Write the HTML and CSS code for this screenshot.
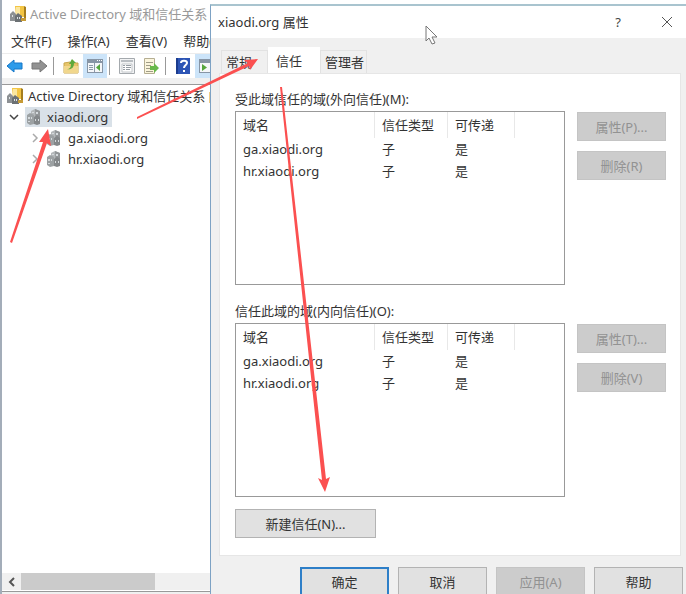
FILE: index.html
```
<!DOCTYPE html>
<html lang="zh-CN">
  <head>
    <meta charset="UTF-8" />
    <meta name="viewport" content="width=device-width, initial-scale=1.0" />
    <title>Active Directory 域和信任关系</title>
    <link rel="stylesheet" href="styles.css">
  </head>
  <body>
    <!-- Shared icons -->
    <svg class="defs" width="0" height="0" aria-hidden="true">
      <symbol id="icon-console" viewBox="0 0 16 16">
        <path d="M5 0h9l1 11H6z" fill="#f3c544" />
        <path d="M6 1h4v8H6z" fill="#fbe7a0" />
        <path d="M14 0l2 1v11l-2 2z" fill="#a57d1e" />
        <path d="M0 8l3-3 3 3v7H0z" fill="#8d9194" />
        <path d="M5 10l3-3 4 3v6H5z" fill="#6c7174" />
        <path d="M2 9h1v2H2zM7 11h1v2H7zM9 11h1v2H9z" fill="#dde2e4" />
        <path d="M11 12h5v3h-5z" fill="#c69a35" />
      </symbol>
      <symbol id="icon-domain" viewBox="0 0 16 16">
        <path d="M5 2l4-2 5 2v11l-5 2-4-2z" fill="#b4b8ba" />
        <path d="M9 0l5 2v12l-4 1z" fill="#929698" />
        <path d="M1 6l3-2 4 2v9l-4 1-3-2z" fill="#9ca1a3" />
        <path d="M8 8l3-2 3 2v7l-3 1-3-1z" fill="#838789" />
        <path d="M6 3h2v1H6zM10 3h2v2h-2zM2 8h2v2H2zM5 8h1v2H5zM2 12h2v1H2zM9 10h1v2H9zM12 10h1v2h-1z" fill="#d5dadd" />
      </symbol>
    </svg>

    <!-- Console window -->
    <div class="console">
      <header class="console-title">
        <svg class="icon"><use href="#icon-console" /></svg>
        <span>Active Directory 域和信任关系</span>
      </header>
      <nav class="menu">
        <button type="button">文件(F)</button>
        <button type="button">操作(A)</button>
        <button type="button">查看(V)</button>
        <button type="button">帮助(H)</button>
      </nav>
      <div class="toolbar">
        <button type="button" class="tool" aria-label="后退">
          <svg class="icon" viewBox="0 0 16 16"><path d="M0 8l7-6v3h8v6H7v3z" fill="#2c9bea" stroke="#1576c8" /></svg>
        </button>
        <button type="button" class="tool" aria-label="前进">
          <svg class="icon" viewBox="0 0 16 16"><path d="M16 8L9 2v3H1v6h8v3z" fill="#929292" stroke="#767676" /></svg>
        </button>
        <span class="sep"></span>
        <button type="button" class="tool" aria-label="上一级">
          <svg class="icon" viewBox="0 0 16 16">
            <path d="M1 5l6-1 1 1h7v10H1z" fill="#e7c56a" stroke="#c9a64c" />
            <path d="M1 8h14v7H1z" fill="#f1d78d" />
            <path d="M4 11c3 0 4-2 4-5H6l3-5 4 4h-2c0 5-3 7-7 6z" fill="#5fa93c" />
          </svg>
        </button>
        <button type="button" class="tool active" aria-label="显示控制台树">
          <svg class="icon" viewBox="0 0 16 16">
            <path d="M0 1h16v14H0z" fill="#8795a5" />
            <path d="M1 5h14v9H1z" fill="#f5f7f9" />
            <path d="M2 7h4v1H2zM2 9h4v1H2zM2 11h4v1H2zM7 5h1v9H7z" fill="#8c99a8" />
            <path d="M13 6v7L9 9.5z" fill="#55a53c" />
            <path d="M10 2h1v1h-1zM12 2h1v1h-1zM14 2h1v1h-1z" fill="#fff" />
          </svg>
        </button>
        <span class="sep"></span>
        <button type="button" class="tool" aria-label="属性">
          <svg class="icon" viewBox="0 0 16 16">
            <path d="M.5.5h15v15H.5z" fill="#f2f3f4" stroke="#a4a9ad" />
            <path d="M2 2h12v2H2z" fill="#b9bec2" />
            <path d="M3 6h10v8H3z" fill="#fff" stroke="#c4c8cb" />
            <path d="M4 7h2v1H4zM7 7h5v1H7zM4 9h2v1H4zM7 9h5v1H7zM4 11h2v1H4zM7 11h4v1H7z" fill="#969da3" />
          </svg>
        </button>
        <button type="button" class="tool" aria-label="导出列表">
          <svg class="icon" viewBox="0 0 16 16">
            <path d="M1.500.5h10v15h-10z" fill="#fbf5dc" stroke="#b5ae92" />
            <path d="M3 4h7v1H3zM3 7h5v1H3zM3 10h5v1H3zM3 13h7v1H3z" fill="#a09c88" />
            <path d="M7 8h4V5l5 5-5 5v-3H7z" fill="#69b84a" />
          </svg>
        </button>
        <span class="sep"></span>
        <button type="button" class="tool" aria-label="帮助">
          <svg class="icon" viewBox="0 0 16 16">
            <path d="M1 0h14v16H1z" fill="#2d55b5" />
            <path d="M1 0h2v16H1z" fill="#1b3c8e" />
            <path d="M6 5c0-3 6-3 6 0 0 2-3 2-3 5" fill="none" stroke="#fff" stroke-width="2" />
            <path d="M8 12h2v2H8z" fill="#fff" />
          </svg>
        </button>
        <button type="button" class="tool active" aria-label="显示操作窗格">
          <svg class="icon" viewBox="0 0 16 16">
            <path d="M0 1h16v14H0z" fill="#8795a5" />
            <path d="M1 5h14v9H1z" fill="#f5f7f9" />
            <path d="M3 6v7l5-3.500z" fill="#55a53c" />
          </svg>
        </button>
      </div>

      <div class="tree-pane">
        <ul class="tree">
          <li class="node root">
            <svg class="icon"><use href="#icon-console" /></svg>
            <span class="node-label">Active Directory 域和信任关系 [ DC</span>
          </li>
          <li class="node">
            <svg class="chevron open" viewBox="0 0 10 10"><path d="M1 3l4 4 4-4" /></svg>
            <span class="selected">
              <svg class="icon"><use href="#icon-domain" /></svg>
              <span class="node-label">xiaodi.org</span>
            </span>
          </li>
          <li class="node child">
            <svg class="chevron" viewBox="0 0 10 10"><path d="M3 1l4 4-4 4" /></svg>
            <svg class="icon"><use href="#icon-domain" /></svg>
            <span class="node-label">ga.xiaodi.org</span>
          </li>
          <li class="node child">
            <svg class="chevron" viewBox="0 0 10 10"><path d="M3 1l4 4-4 4" /></svg>
            <svg class="icon"><use href="#icon-domain" /></svg>
            <span class="node-label">hr.xiaodi.org</span>
          </li>
        </ul>
        <div class="scrollbar">
          <button type="button" class="scroll-left" aria-label="向左滚动">
            <svg width="8" height="10" viewBox="0 0 8 10"><path d="M6 1L2 5l4 4" /></svg>
          </button>
          <div class="thumb"></div>
        </div>
      </div>
    </div>

    <!-- Properties dialog -->
    <section class="dialog" role="dialog" aria-labelledby="dialogTitle">
      <header class="dialog-title">
        <h1 id="dialogTitle">xiaodi.org 属性</h1>
        <button type="button" class="title-btn help" aria-label="帮助">?</button>
        <button type="button" class="title-btn" aria-label="关闭">
          <svg width="12" height="12" viewBox="0 0 12 12"><path d="M1 1l10 10M11 1L1 11" /></svg>
        </button>
      </header>

      <div class="dialog-body">
        <div class="tabs" role="tablist">
          <button type="button" class="tab" role="tab">常规</button>
          <button type="button" class="tab current" role="tab" aria-selected="true">信任</button>
          <button type="button" class="tab" role="tab">管理者</button>
        </div>

        <div class="panel" role="tabpanel">
          <h2 id="outgoing">受此域信任的域(外向信任)(M):</h2>
          <div class="trusts">
            <div class="list">
              <table aria-labelledby="outgoing">
                <thead>
                  <tr><th class="col-name">域名</th><th class="col-type">信任类型</th><th class="col-pass">可传递</th><th></th></tr>
                </thead>
                <tbody>
                  <tr><td>ga.xiaodi.org</td><td>子</td><td>是</td><td></td></tr>
                  <tr><td>hr.xiaodi.org</td><td>子</td><td>是</td><td></td></tr>
                </tbody>
              </table>
            </div>
            <div class="side">
              <button type="button" class="btn" disabled>属性(P)...</button>
              <button type="button" class="btn" disabled>删除(R)</button>
            </div>
          </div>

          <h2 id="incoming">信任此域的域(内向信任)(O):</h2>
          <div class="trusts">
            <div class="list">
              <table aria-labelledby="incoming">
                <thead>
                  <tr><th class="col-name">域名</th><th class="col-type">信任类型</th><th class="col-pass">可传递</th><th></th></tr>
                </thead>
                <tbody>
                  <tr><td>ga.xiaodi.org</td><td>子</td><td>是</td><td></td></tr>
                  <tr><td>hr.xiaodi.org</td><td>子</td><td>是</td><td></td></tr>
                </tbody>
              </table>
            </div>
            <div class="side">
              <button type="button" class="btn" disabled>属性(T)...</button>
              <button type="button" class="btn" disabled>删除(V)</button>
            </div>
          </div>

          <button type="button" class="btn new-trust">新建信任(N)...</button>
        </div>

        <footer class="actions">
          <button type="button" class="btn default">确定</button>
          <button type="button" class="btn">取消</button>
          <button type="button" class="btn" disabled>应用(A)</button>
          <button type="button" class="btn">帮助</button>
        </footer>
      </div>
    </section>

    <!-- Arrows and mouse pointer -->
    <svg class="marks" aria-hidden="true">
      <g fill="#fb5050">
        <path d="M10 242L43 142L39 142L48 129L51 146L47 143L12 243z" />
        <path d="M137 117L248 63L244 60L258 59L250 70L249 66L137 119z" />
        <path d="M280 87L322 480L318 478L325 492L330 477L326 479L282 87z" />
      </g>
      <path d="M426 26v15l3-3 3 6 3-1-3-6h5z" fill="#fff" stroke="#777" />
    </svg>
  </body>
</html>
```
FILE: styles.css
```
* {
  box-sizing: border-box;
}
body {
  margin: 0;
  height: 100vh;
  overflow: hidden;
  position: relative;
  background-color: #f0f0f0;
  color: #333;
  font-family: "Noto Sans", "Noto Sans CJK SC", sans-serif;
  font-size: 13px;
  line-height: 20px;
}
button {
  margin: 0;
  padding: 0;
  border: 0;
  background: none;
  color: inherit;
  font: inherit;
  white-space: nowrap;
}
h1,
h2 {
  margin: 0;
  font-size: 13px;
  font-weight: 400;
}
.defs {
  position: absolute;
}
.icon {
  flex: none;
  width: 16px;
  height: 16px;
}

/* Console window */
.console {
  display: flex;
  flex-direction: column;
  height: 100%;
  border-left: 2px solid #a3adb9;
  padding-bottom: 2px;
  white-space: nowrap;
}
.console-title {
  display: flex;
  align-items: center;
  gap: 4px;
  height: 27px;
  padding-left: 8px;
  background-color: #fff;
  color: #999;
}
.menu {
  display: flex;
  align-items: center;
  gap: 16px;
  height: 26px;
  padding: 2px 0 0 9px;
  background-color: #fff;
}
.toolbar {
  display: flex;
  align-items: center;
  height: 25px;
  padding-left: 1px;
  border-top: 1px solid #ececec;
  background-color: #fff;
}
.tool {
  display: flex;
  flex: none;
  align-items: center;
  justify-content: center;
  width: 24px;
  height: 24px;
}
.tool.active {
  background-color: #cce4f9;
}
.sep {
  width: 1px;
  height: 18px;
  margin: 0 5px 0 2px;
  background-color: #999;
}
.tree-pane {
  display: flex;
  flex: 1;
  flex-direction: column;
  margin-top: 6px;
  border: 1px solid #999;
  border-left: 0;
  background-color: #fff;
}
.tree {
  flex: 1;
  margin: 0;
  padding: 0 0 0 5px;
  list-style: none;
}
.node {
  display: flex;
  align-items: center;
  gap: 6px;
  height: 21px;
  padding-left: 2px;
}
.node.root {
  gap: 5px;
  padding-left: 0;
}
.node.child {
  padding-left: 23px;
}
.selected {
  display: flex;
  align-items: center;
  gap: 5px;
  height: 20px;
  padding: 0 4px 0 1px;
  background-color: #d9e1e8;
}
.chevron {
  width: 10px;
  height: 10px;
  fill: none;
  stroke: #aaa;
  stroke-width: 1.5;
}
.chevron.open {
  stroke: #444;
}
.scrollbar {
  display: flex;
  height: 17px;
  margin-bottom: 1px;
  background-color: #f0f0f0;
}
.scroll-left {
  display: flex;
  align-items: center;
  justify-content: center;
  width: 19px;
}
.scroll-left svg {
  fill: none;
  stroke: #555;
  stroke-width: 2;
}
.thumb {
  width: 134px;
  background-color: #cbcbcb;
}

/* Properties dialog */
.dialog {
  position: absolute;
  top: 4px;
  right: 0;
  bottom: 0;
  left: 210px;
  display: flex;
  flex-direction: column;
  overflow: hidden;
  border-top: 2px solid #a9c4cf;
  border-left: 1px solid #7da2c4;
  background-color: #f0f0f0;
}
.dialog-title {
  display: flex;
  flex: none;
  align-items: center;
  height: 32px;
  padding-left: 7px;
  background-color: #fff;
}
.dialog-title h1 {
  flex: 1;
}
.title-btn {
  display: flex;
  align-items: center;
  justify-content: center;
  width: 38px;
  height: 32px;
  color: #444;
}
.title-btn.help {
  width: 60px;
}
.title-btn svg {
  fill: none;
  stroke: #555;
}
.dialog-body {
  padding: 9px 5px 0 8px;
}
.tabs {
  display: flex;
  align-items: flex-end;
  padding-left: 2px;
}
.tab {
  width: 47px;
  height: 23px;
  padding-left: 4px;
  border: 1px solid #e2e2e2;
  border-bottom: 0;
  text-align: left;
}
.tab.current {
  width: 52px;
  height: 26px;
  padding-left: 7px;
  border-color: #fff;
  background-color: #fff;
}
.panel {
  padding: 15px 14px 17px 15px;
  border: 1px solid #e6e6e6;
  background-color: #fff;
}
.panel h2 {
  margin-bottom: 2px;
}
.trusts {
  display: flex;
  gap: 12px;
  margin-bottom: 16px;
}
.list {
  flex: 1;
  height: 174px;
  border: 1px solid #999;
}
.list table {
  width: 100%;
  table-layout: fixed;
  border-collapse: separate;
  border-spacing: 0;
}
.list th,
.list td {
  height: 22px;
  padding: 0 0 0 7px;
  font-weight: 400;
  text-align: left;
}
.list th {
  height: 26px;
  border-right: 1px solid #e8e8e8;
}
.list th:last-child {
  border-right: 0;
}
.list .col-name {
  width: 139px;
}
.list .col-type {
  width: 73px;
}
.list .col-pass {
  width: 67px;
}
.side {
  display: flex;
  flex-direction: column;
  gap: 10px;
  width: 89px;
  padding-top: 1px;
}
.btn {
  width: 89px;
  height: 29px;
  border: 1px solid #b3b3b3;
  background-color: #e1e1e1;
}
.btn:disabled {
  border-color: #c4c4c4;
  background-color: #ccc;
  color: #929292;
}
.btn.default {
  border: 2px solid #2e7fc8;
}
.new-trust {
  display: block;
  width: 141px;
  margin-top: -4px;
}
.actions {
  display: flex;
  justify-content: flex-end;
  gap: 9px;
  margin-right: -2px;
  padding-top: 11px;
}

.marks {
  position: absolute;
  top: 0;
  left: 0;
  width: 100%;
  height: 100%;
  pointer-events: none;
}
```
